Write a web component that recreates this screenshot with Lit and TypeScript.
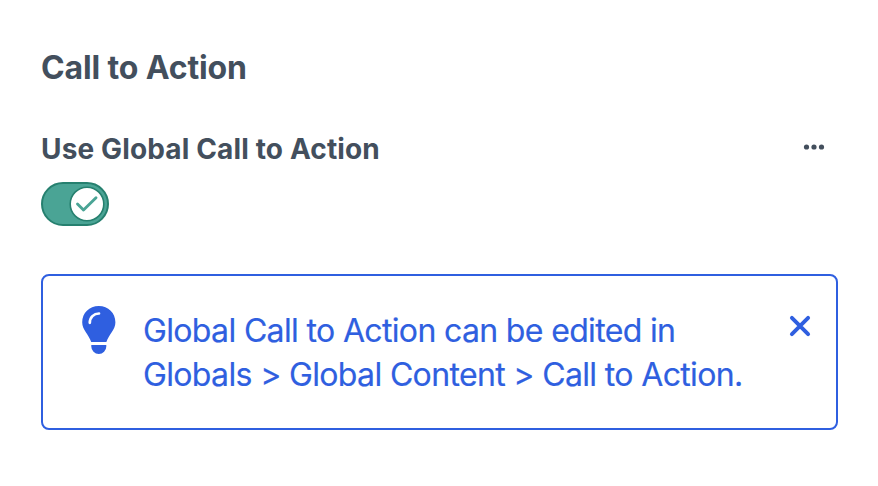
import { LitElement, html, css } from "lit";
import { customElement } from "lit/decorators.js";

@customElement("app-root")
class AppRoot extends LitElement {
  static styles = css`
    :host { display: block; height: 486px; box-sizing: border-box; padding: 48px 40px 0 41px; background: #fff; color: #434f5d; font-family: Inter, sans-serif; overflow: hidden; }
    h1 { margin: 0; font-size: 32px; line-height: 40px; font-weight: 700; letter-spacing: -0.13px; }
    .row { display: flex; justify-content: space-between; align-items: center; height: 36px; margin-top: 42px; padding-right: 13px; }
    h2 { margin: 0; padding-top: 2px; font-size: 28px; line-height: 36px; font-weight: 700; letter-spacing: 0.14px; }
    svg { display: block; flex: none; }
    .more { margin-bottom: 2px; }
    .toggle { margin-top: 16px; }
    .tip { display: flex; box-sizing: border-box; width: 797px; height: 156px; margin-top: 48px; border: 2px solid #2f5fe0; border-radius: 8px; color: #2f5fe0; padding: 29px 25px 0 39px; }
    p { margin: 4px 0 0 27px; flex: 1; font-size: 32px; line-height: 44px; letter-spacing: -0.65px; white-space: nowrap; -webkit-text-stroke: 0.2px currentColor; }
    .close { margin-top: 10px; }
  `;

  render() {
    return html`
      <h1>Call to Action</h1>
      <div class="row"><h2>Use Global Call to Action</h2>
        <svg class="more" width="22" height="8" viewBox="0 0 22 8" fill="currentColor"><circle cx="3.500" cy="4" r="2.600"/><circle cx="11" cy="4" r="2.600"/><circle cx="18.500" cy="4" r="2.600"/></svg>
      </div>
      <svg class="toggle" width="68" height="44" viewBox="0 0 68 44" fill="none"><rect x="1" y="1" width="66" height="42" rx="21" fill="#4aa495" stroke="#26806f" stroke-width="2"/><circle cx="46" cy="22" r="16.800" fill="#fff" stroke="#26806f" stroke-width="1.600"/><path d="M36.500 22l6 6L55 15.800" stroke="#4aa495" stroke-width="2.900" stroke-linecap="round" stroke-linejoin="round"/></svg>
      <div class="tip">
        <svg width="34" height="50" viewBox="0 0 34 50"><path d="M16.800 1C7.300 1 0.200 8.200 0.200 17.200c0 7.800 6.400 11.800 9 19.800h15.200c2.600-8 9-12 9-19.800C33.400 8.200 26.300 1 16.800 1zM9.300 40h15v1.500a7.300 7.300 0 0 1-15 0z" fill="currentColor"/><path d="M7.800 17.800c0-5.500 4-9.300 9.200-9.300" fill="none" stroke="#fff" stroke-width="2.700" stroke-linecap="round"/></svg>
        <p>Global Call to Action can be edited in<br>Globals &gt; Global Content &gt; Call to Action.</p>
        <svg class="close" width="22" height="22" viewBox="0 0 22 22"><path d="M2.900 2.900l16.200 16.200M19.100 2.900L2.900 19.100" stroke="currentColor" stroke-width="3.900" stroke-linecap="round"/></svg>
      </div>`;
  }
}
